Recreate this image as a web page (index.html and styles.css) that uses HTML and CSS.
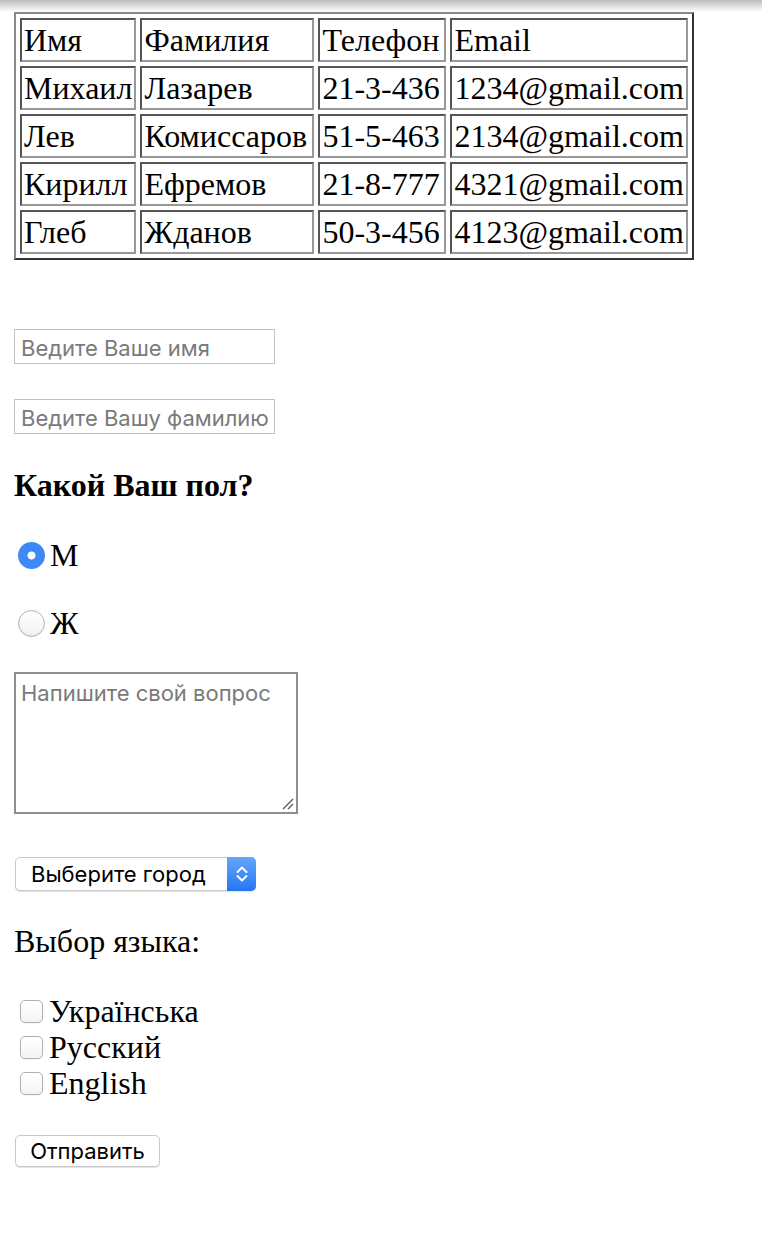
FILE: index.html
```html
<!DOCTYPE html>
<html lang="ru">
<head>
<meta charset="utf-8">
<title>Форма</title>
<link rel="stylesheet" href="styles.css">
</head>
<body>
<table class="contacts">
  <tr><td>Имя</td><td>Фамилия</td><td>Телефон</td><td>Email</td></tr>
  <tr><td>Михаил</td><td>Лазарев</td><td>21-3-436</td><td>1234@gmail.com</td></tr>
  <tr><td>Лев</td><td>Комиссаров</td><td>51-5-463</td><td>2134@gmail.com</td></tr>
  <tr><td>Кирилл</td><td>Ефремов</td><td>21-8-777</td><td>4321@gmail.com</td></tr>
  <tr><td>Глеб</td><td>Жданов</td><td>50-3-456</td><td>4123@gmail.com</td></tr>
</table>
<form class="form">
  <input class="field field-name" type="text" placeholder="Ведите Ваше имя">
  <input class="field field-surname" type="text" placeholder="Ведите Вашу фамилию">
  <p class="question">Какой Ваш пол?</p>
  <label class="choice choice-first"><input class="radio" type="radio" name="sex" checked><span>М</span></label>
  <label class="choice choice-second"><input class="radio" type="radio" name="sex"><span>Ж</span></label>
  <div class="message-wrap">
    <textarea class="message" placeholder="Напишите свой вопрос"></textarea>
    <svg class="grip" width="12" height="12" viewBox="0 0 12 12"><line x1="1" y1="11" x2="11" y2="1" stroke="#555" stroke-width="1.2"/><line x1="6" y1="11" x2="11" y2="6" stroke="#555" stroke-width="1.2"/></svg>
  </div>
  <div class="city">
    <select class="city-select"><option>Выберите город</option></select>
    <span class="city-arrow"><svg width="14" height="22" viewBox="0 0 14 22"><polyline points="2.5,9 7,4.5 11.5,9" fill="none" stroke="#fff" stroke-width="2" stroke-linecap="round" stroke-linejoin="round"/><polyline points="2.5,13 7,17.5 11.5,13" fill="none" stroke="#fff" stroke-width="2" stroke-linecap="round" stroke-linejoin="round"/></svg></span>
  </div>
  <p class="lang-title">Выбор языка:</p>
  <div class="langs">
    <label class="check"><input class="box" type="checkbox"><span>Українська</span></label>
    <label class="check"><input class="box" type="checkbox"><span>Русский</span></label>
    <label class="check"><input class="box" type="checkbox"><span>English</span></label>
  </div>
  <button class="send" type="button">Отправить</button>
</form>
</body>
</html>
```
FILE: styles.css
```css
html { background: #fff; }
body {
  margin: 0;
  padding: 12px 14px 40px;
  font-family: "Liberation Serif", "Times New Roman", serif;
  font-size: 32px;
  line-height: 36px;
  color: #000;
  background: #fff;
}
body::before {
  content: "";
  position: absolute;
  top: 0;
  left: 0;
  right: 0;
  height: 12px;
  background: linear-gradient(rgba(0,0,0,0.26), rgba(0,0,0,0));
}
.contacts {
  border-collapse: separate;
  border-spacing: 4px;
  border: 2px solid;
  border-color: #8a8a8a #333 #333 #8a8a8a;
  font-size: 32px;
  line-height: 36px;
}
.contacts td {
  padding: 2px;
  border: 2px solid;
  border-color: #555 #999 #999 #555;
  white-space: nowrap;
  text-align: left;
  vertical-align: middle;
}
.contacts td:nth-child(1) { width: 108px; }
.contacts td:nth-child(2) { width: 166px; }
.contacts td:nth-child(3) { width: 120px; }
.contacts td:nth-child(4) { width: 230px; }
.form {
  display: flex;
  flex-direction: column;
  align-items: flex-start;
}
.field {
  display: block;
  box-sizing: border-box;
  width: 261px;
  height: 35px;
  margin: 0;
  border: 1px solid #c2c2c2;
  padding: 2px 6px 0;
  font: 22px Inter, "Liberation Sans", Arial, sans-serif;
  color: #000;
  background: #fff;
}
.field::placeholder, .message::placeholder { color: #7a7a7a; }
.field-name { margin-top: 69px; }
.field-surname { margin-top: 35px; }
.question {
  margin: 33px 0 0;
  font-size: 32px;
  font-weight: bold;
  line-height: 36px;
}
.choice {
  display: flex;
  align-items: center;
  gap: 5px;
  height: 36px;
}
.choice-first { margin-top: 34px; }
.choice-second { margin-top: 32px; }
.radio {
  appearance: none;
  -webkit-appearance: none;
  box-sizing: border-box;
  width: 27px;
  height: 27px;
  margin: 0 0 0 4px;
  border-radius: 50%;
  border: 1px solid #b0b0b0;
  background: linear-gradient(#fff, #f2f2f2);
  box-shadow: inset 0 -1px 1px rgba(0,0,0,0.06);
}
.radio:checked {
  border: none;
  background: radial-gradient(circle, #fff 0 3.6px, #3d89f7 4.4px);
  box-shadow: none;
}
.message-wrap {
  position: relative;
  margin-top: 31px;
}
.message {
  display: block;
  box-sizing: border-box;
  width: 284px;
  height: 142px;
  margin: 0;
  border: 2px solid #8e8e8e;
  padding: 7px 5px;
  font: 22px Inter, "Liberation Sans", Arial, sans-serif;
  line-height: 25px;
  background: #fff;
  resize: none;
}
.grip {
  position: absolute;
  right: 4px;
  bottom: 4px;
}
.city {
  position: relative;
  width: 241px;
  height: 34px;
  margin: 43px 0 0 1px;
}
.city-select {
  display: block;
  appearance: none;
  -webkit-appearance: none;
  box-sizing: border-box;
  width: 241px;
  height: 34px;
  margin: 0;
  border: 1px solid #c9c9c9;
  border-radius: 5px;
  padding: 0 0 0 15px;
  background: #fff;
  font: 22px Inter, "Liberation Sans", Arial, sans-serif;
  color: #000;
  box-shadow: 0 1px 1px rgba(0,0,0,0.12);
}
.city-arrow {
  position: absolute;
  top: 0;
  right: 0;
  width: 29px;
  height: 34px;
  border-radius: 0 5px 5px 0;
  background: linear-gradient(#64a6fa, #2576f3);
  display: flex;
  align-items: center;
  justify-content: center;
  pointer-events: none;
}
.lang-title { margin: 32px 0 0; }
.langs { margin-top: 34px; }
.check {
  display: flex;
  align-items: center;
  gap: 6px;
  height: 36px;
}
.box {
  appearance: none;
  -webkit-appearance: none;
  box-sizing: border-box;
  width: 23px;
  height: 23px;
  margin: 0 0 0 6px;
  border: 1px solid #b0b0b0;
  border-radius: 5px;
  background: linear-gradient(#fff, #f4f4f4);
  box-shadow: 0 1px 0 rgba(0,0,0,0.04);
}
.send {
  box-sizing: border-box;
  width: 145px;
  height: 32px;
  margin: 34px 0 0 1px;
  border: 1px solid #c8c8c8;
  border-radius: 5px;
  background: #fff;
  font: 22px Inter, "Liberation Sans", Arial, sans-serif;
  color: #000;
  box-shadow: 0 1px 1px rgba(0,0,0,0.12);
  padding: 0;
}
```
